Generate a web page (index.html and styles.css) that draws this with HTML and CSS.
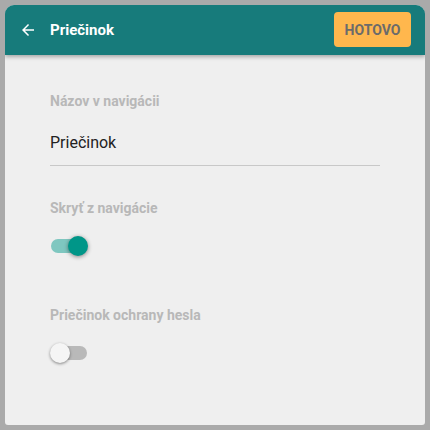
FILE: index.html
```html
<!DOCTYPE html>
<html lang="sk">
<head>
<meta charset="utf-8">
<title>Priečinok</title>
<link rel="stylesheet" href="styles.css">
</head>
<body>
<div class="card">
  <header class="topbar">
    <div class="topbar-left">
      <svg class="back" width="18" height="18" viewBox="0 0 24 24" aria-hidden="true">
        <path fill="#ffffff" d="M20 11H7.83l5.59-5.59L12 4l-8 8 8 8 1.41-1.41L7.83 13H20v-2z"/>
      </svg>
      <span class="title">Priečinok</span>
    </div>
    <button class="done">HOTOVO</button>
  </header>
  <main class="content">
    <div class="field">
      <div class="label">Názov v navigácii</div>
      <div class="input">Priečinok</div>
    </div>
    <div class="field switch-field">
      <div class="label">Skryť z navigácie</div>
      <div class="switch on"><span class="track"></span><span class="thumb"></span></div>
    </div>
    <div class="field switch-field">
      <div class="label">Priečinok ochrany hesla</div>
      <div class="switch"><span class="track"></span><span class="thumb"></span></div>
    </div>
  </main>
</div>
</body>
</html>
```

FILE: styles.css
```css
html, body {
  margin: 0;
  padding: 0;
  background: #aaaaaa;
  font-family: Roboto, "Liberation Sans", Arial, sans-serif;
}
body {
  padding: 5px;
  width: 430px;
  height: 430px;
  box-sizing: border-box;
}
.card {
  width: 420px;
  height: 420px;
  background: #efefef;
  border-radius: 9px 9px 3px 3px;
  overflow: hidden;
  display: flex;
  flex-direction: column;
}
.topbar {
  height: 50px;
  flex: none;
  background: #177b7b;
  display: flex;
  align-items: center;
  justify-content: space-between;
  padding: 0 14px 0 14px;
  box-shadow: 0 2px 4px rgba(0, 0, 0, 0.3);
  position: relative;
  z-index: 1;
}
.topbar-left {
  display: flex;
  align-items: center;
}
.back {
  display: block;
  margin-left: 0;
  margin-right: 13px;
}
.title {
  color: #ffffff;
  font-weight: 700;
  font-size: 15px;
  line-height: 20px;
}
.done {
  width: 77px;
  height: 35px;
  margin-top: -1px;
  border: none;
  border-radius: 4px;
  background: #ffb74d;
  color: #6b6b6b;
  font-family: Roboto, "Liberation Sans", Arial, sans-serif;
  font-weight: 700;
  font-size: 14px;
  padding: 0;
}
.content {
  padding: 38px 45px 0 45px;
}
.label {
  font-size: 14px;
  line-height: 16px;
  font-weight: 700;
  color: #b8b8b8;
}
.input {
  margin-top: 24px;
  font-size: 16px;
  line-height: 20px;
  color: #222222;
  padding-bottom: 12px;
  border-bottom: 1px solid #c8c8c8;
}
.switch-field {
  margin-top: 34px;
}
.switch-field + .switch-field {
  margin-top: 51px;
}
.switch {
  margin-top: 20px;
  width: 38px;
  height: 20px;
  display: flex;
  align-items: center;
  position: relative;
}
.track {
  display: block;
  width: 36px;
  height: 14px;
  border-radius: 7px;
  margin-left: 1px;
  background: #b9b9b9;
}
.thumb {
  position: absolute;
  top: 0;
  left: 0;
  width: 20px;
  height: 20px;
  border-radius: 50%;
  background: #f5f5f5;
  box-shadow: 0 1px 3px rgba(0, 0, 0, 0.45);
}
.switch.on .track {
  background: #7fc7c0;
}
.switch.on .thumb {
  left: 18px;
  background: #009688;
  box-shadow: 0 1px 4px rgba(0, 0, 0, 0.45);
}
```
